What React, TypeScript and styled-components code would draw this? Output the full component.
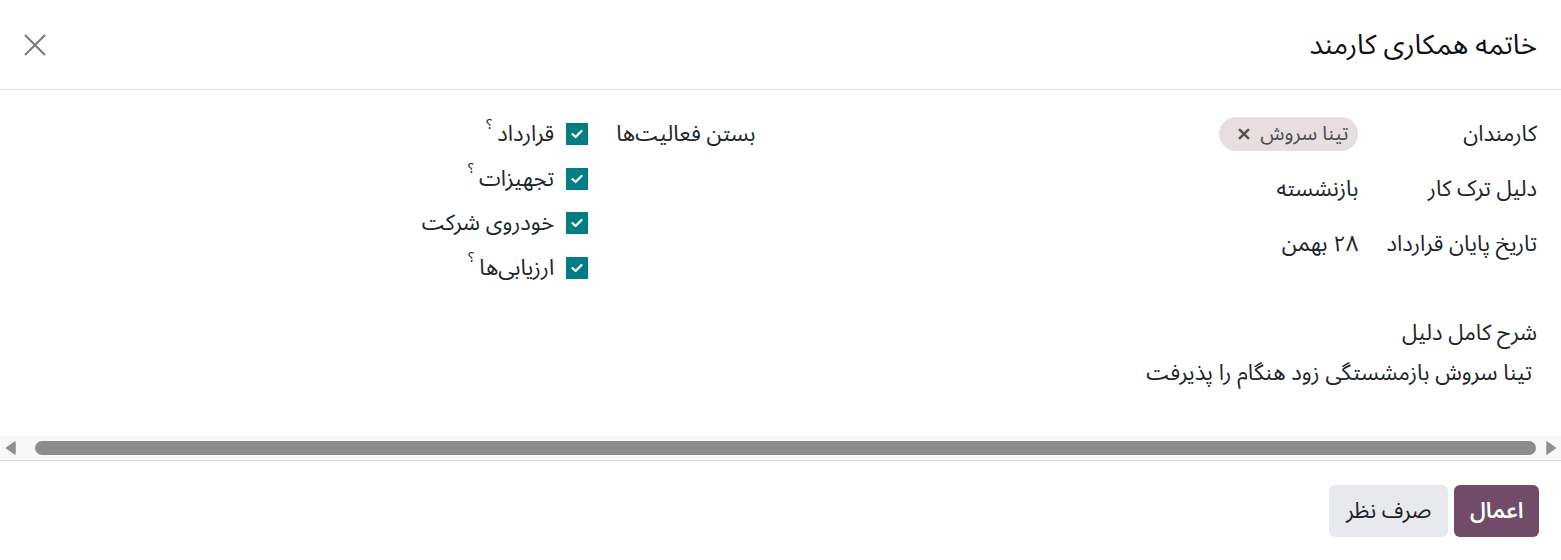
import styled, { createGlobalStyle } from "styled-components";

const GlobalStyle = createGlobalStyle`
  html, body {
    margin: 0;
    padding: 0;
    background: #ffffff;
  }
  body {
    font-family: "Noto Sans Arabic", "Noto Sans", "DejaVu Sans", sans-serif;
    color: #212529;
  }
`;

const Dialog = styled.div`
  width: 1561px;
  height: 560px;
  display: flex;
  flex-direction: column;
  background: #ffffff;
  overflow: hidden;
`;

const Header = styled.header`
  height: 89px;
  border-bottom: 1px solid #dee2e6;
  display: flex;
  align-items: center;
  justify-content: space-between;
  padding: 0 24px;
`;

const Title = styled.h4`
  margin: 0;
  font-size: 27.5px;
  font-weight: 400;
  color: #111111;
`;

const CloseButton = styled.button`
  border: 0;
  background: none;
  padding: 0;
  width: 22px;
  height: 22px;
  display: flex;
  cursor: pointer;
`;

const Body = styled.main`
  height: 346px;
  box-sizing: border-box;
  padding: 25px 24px 0;
`;

const Groups = styled.div`
  display: grid;
  grid-template-columns: 1fr 1fr;
`;

const Group = styled.div<{ $inset?: boolean }>`
  display: grid;
  grid-template-columns: max-content 1fr;
  grid-auto-rows: 38px;
  row-gap: ${(p) => (p.$inset ? "6.6px" : "17px")};
  padding-right: ${(p) => (p.$inset ? "25px" : "0")};
  align-items: center;
`;

const Label = styled.div`
  font-size: 22px;
  font-weight: 400;
  padding-left: 28px;
  white-space: nowrap;
`;

const Value = styled.div`
  font-size: 22px;
  display: flex;
  align-items: center;
`;

const Tag = styled.span`
  display: inline-flex;
  align-items: center;
  gap: 10px;
  height: 34px;
  box-sizing: border-box;
  padding: 0 10px 0 19px;
  border-radius: 17px;
  background: #e6dedf;
  color: #4a4f55;
  font-size: 20px;
`;

const CheckList = styled.div`
  grid-row: span 4;
  display: grid;
  grid-auto-rows: 38px;
  row-gap: 6.6px;
  align-self: start;
`;

const CheckRow = styled.label`
  display: flex;
  align-items: center;
  gap: 12px;
  font-size: 22px;
`;

const Box = styled.span`
  width: 22px;
  height: 22px;
  background: #017e84;
  display: flex;
  align-items: center;
  justify-content: center;
  flex: none;
`;

const Help = styled.sup`
  font-size: 14px;
  margin-right: 5px;
  position: relative;
  top: -4px;
`;

const Section = styled.section`
  margin-top: 27px;
`;

const SectionLabel = styled.div`
  font-size: 22px;
  line-height: 38px;
`;

const Description = styled.p`
  margin: 2px 5px 0 0;
  font-size: 22px;
  line-height: 38px;
`;

const ScrollBar = styled.div`
  height: 24px;
  background: #f8f8f8;
  border-bottom: 1px solid #dcdcdc;
  display: flex;
  align-items: center;
  direction: ltr;
  padding: 0 4px 0 5px;
`;

const Thumb = styled.div`
  flex: 1;
  height: 14px;
  border-radius: 7px;
  background: #8c8c8c;
  margin: 0 10px 0 19px;
`;

const Footer = styled.footer`
  display: flex;
  gap: 6px;
  padding: 24px 22px 0;
`;

const Button = styled.button<{ $primary?: boolean }>`
  height: 52px;
  padding: 0 ${(p) => (p.$primary ? "15.5px" : "17px")};
  border: 0;
  border-radius: 6px;
  font-family: inherit;
  font-size: 22px;
  font-weight: ${(p) => (p.$primary ? 600 : 400)};
  color: ${(p) => (p.$primary ? "#ffffff" : "#1f2328")};
  background: ${(p) => (p.$primary ? "#714b67" : "#e7e9ed")};
  cursor: pointer;
`;

const Check = () => (
  <svg width="12" height="10" viewBox="0 0 12 10">
    <path d="M1.5 5.2 L4.6 8 L10.5 2" fill="none" stroke="#fff" strokeWidth="2.3" strokeLinecap="round" strokeLinejoin="round" />
  </svg>
);

const Arrow = ({ dir }: { dir: "left" | "right" }) => (
  <svg width="11" height="14" viewBox="0 0 11 14">
    <path
      d={dir === "left" ? "M10 1 L1.5 7 L10 13 Z" : "M1 1 L9.5 7 L1 13 Z"}
      fill="#8f8f8f"
      stroke="#8f8f8f"
      strokeWidth="1.5"
      strokeLinejoin="round"
    />
  </svg>
);

const tasks = [
  { name: "قرارداد", help: true },
  { name: "تجهیزات", help: true },
  { name: "خودروی شرکت", help: false },
  { name: "ارزیابی‌ها", help: true },
];

export default function App() {
  return (
    <Dialog dir="rtl">
      <GlobalStyle />
      <Header>
        <Title>خاتمه همکاری کارمند</Title>
        <CloseButton aria-label="بستن">
          <svg width="22" height="22" viewBox="0 0 22 22">
            <path d="M1 1 L21 21 M21 1 L1 21" stroke="#777" strokeWidth="2" />
          </svg>
        </CloseButton>
      </Header>
      <Body>
        <Groups>
          <Group>
            <Label>کارمندان</Label>
            <Value>
              <Tag>
                تینا سروش
                <svg width="12" height="12" viewBox="0 0 12 12">
                  <path d="M1.8 1.8 L10.2 10.2 M10.2 1.8 L1.8 10.2" stroke="#555" strokeWidth="2.6" strokeLinecap="round" />
                </svg>
              </Tag>
            </Value>
            <Label>دلیل ترک کار</Label>
            <Value>بازنشسته</Value>
            <Label>تاریخ پایان قرارداد</Label>
            <Value>۲۸ بهمن</Value>
          </Group>
          <Group $inset>
            <Label>بستن فعالیت‌ها</Label>
            <CheckList>
              {tasks.map((t) => (
                <CheckRow key={t.name}>
                  <Box>
                    <Check />
                  </Box>
                  <span>
                    {t.name}
                    {t.help && <Help>؟</Help>}
                  </span>
                </CheckRow>
              ))}
            </CheckList>
          </Group>
        </Groups>
        <Section>
          <SectionLabel>شرح کامل دلیل</SectionLabel>
          <Description>تینا سروش بازمشستگی زود هنگام را پذیرفت</Description>
        </Section>
      </Body>
      <ScrollBar>
        <Arrow dir="left" />
        <Thumb />
        <Arrow dir="right" />
      </ScrollBar>
      <Footer>
        <Button $primary>اعمال</Button>
        <Button>صرف نظر</Button>
      </Footer>
    </Dialog>
  );
}
